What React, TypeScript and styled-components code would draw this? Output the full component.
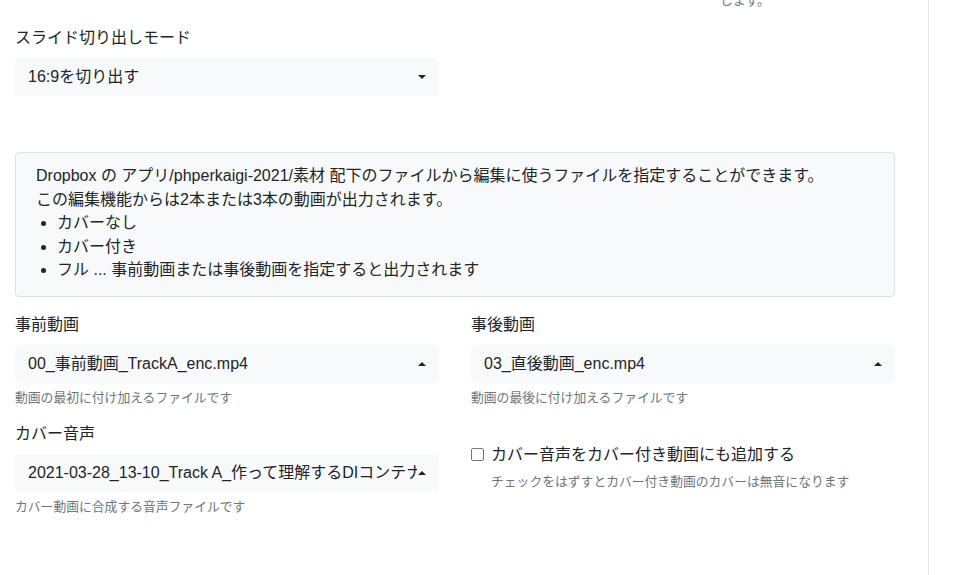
import { Component, ReactNode } from "react";
import styled, { createGlobalStyle } from "styled-components";

const GlobalStyle = createGlobalStyle`
  html, body {
    margin: 0;
    padding: 0;
    background: #ffffff;
    overflow: hidden;
  }
  body {
    font-family: "Liberation Sans", "Noto Sans CJK JP", sans-serif;
    color: #212529;
    font-size: 16px;
  }
`;

const Page = styled.div`
  display: flex;
  height: 575px;
  overflow: hidden;
`;

const Main = styled.div`
  width: 929px;
  box-sizing: border-box;
  padding: 0 33px 0 15px;
  border-right: 1px solid #e3e3e3;
  flex-shrink: 0;
`;

const Row = styled.div`
  display: grid;
  grid-template-columns: 424px 424px;
  column-gap: 32px;
`;

const Group = styled.div`
  margin-bottom: 15px;
`;

const TopGroup = styled.div`
  padding-top: 25px;
`;

const Label = styled.div`
  font-size: 16px;
  line-height: 24px;
  margin-bottom: 8px;
`;

const SelectBox = styled.div`
  height: 38px;
  background: #f8f9fa;
  border-radius: 4px;
  display: flex;
  align-items: center;
  padding: 0 12px 0 13px;
  font-size: 16px;
`;

const SelectValue = styled.span`
  flex: 1;
  white-space: nowrap;
  overflow: hidden;
  text-overflow: clip;
  line-height: 24px;
`;

const Caret = styled.span<{ $up?: boolean }>`
  width: 0;
  height: 0;
  border-left: 4px solid transparent;
  border-right: 4px solid transparent;
  ${(p) => (p.$up ? "border-bottom: 4px solid #212529;" : "border-top: 4px solid #212529;")}
  margin: 0 1px;
  flex-shrink: 0;
`;

const Help = styled.div`
  font-size: 12.8px;
  line-height: 19px;
  color: #6c757d;
  margin-top: 5px;
`;

const TopHelp = styled(Help)`
  margin-top: -9px;
  padding-left: 249px;
  height: 10px;
`;

const InfoBox = styled.div`
  margin-top: 56px;
  background: #f8f9fa;
  border: 1px solid #dee2e6;
  border-radius: 4px;
  padding: 11px 20px 14px;
  font-size: 16px;
  line-height: 23.5px;
  margin-bottom: 16px;
`;

const InfoList = styled.ul`
  margin: 0;
  padding-left: 21px;
`;

const CheckWrap = styled.div`
  margin-top: 21px;
`;

const CheckRow = styled.label`
  display: flex;
  align-items: center;
  font-size: 16px;
  line-height: 24px;
`;

const CheckBox = styled.span`
  width: 11px;
  height: 11px;
  border: 1px solid #767676;
  border-radius: 2px;
  margin: 0 7px 0 0;
  flex-shrink: 0;
`;

const CheckHelp = styled(Help)`
  padding-left: 20px;
`;

interface SelectProps {
  value: string;
  up?: boolean;
}

class Select extends Component<SelectProps> {
  render(): ReactNode {
    return (
      <SelectBox>
        <SelectValue>{this.props.value}</SelectValue>
        <Caret $up={this.props.up} />
      </SelectBox>
    );
  }
}

export default class App extends Component {
  render(): ReactNode {
    return (
      <Page>
        <GlobalStyle />
        <Main>
          <Row>
            <div />
            <TopHelp>します。</TopHelp>
          </Row>
          <Row>
            <TopGroup>
              <Label>スライド切り出しモード</Label>
              <Select value="16:9を切り出す" />
            </TopGroup>
            <div />
          </Row>
          <InfoBox>
            Dropbox の アプリ/phperkaigi-2021/素材 配下のファイルから編集に使うファイルを指定することができます。
            <br />
            この編集機能からは2本または3本の動画が出力されます。
            <InfoList>
              <li>カバーなし</li>
              <li>カバー付き</li>
              <li>フル ... 事前動画または事後動画を指定すると出力されます</li>
            </InfoList>
          </InfoBox>
          <Row>
            <Group>
              <Label>事前動画</Label>
              <Select value="00_事前動画_TrackA_enc.mp4" up />
              <Help>動画の最初に付け加えるファイルです</Help>
            </Group>
            <Group>
              <Label>事後動画</Label>
              <Select value="03_直後動画_enc.mp4" up />
              <Help>動画の最後に付け加えるファイルです</Help>
            </Group>
          </Row>
          <Row>
            <Group>
              <Label>カバー音声</Label>
              <Select value="2021-03-28_13-10_Track A_作って理解するDIコンテナ.mp3" up />
              <Help>カバー動画に合成する音声ファイルです</Help>
            </Group>
            <CheckWrap>
              <CheckRow>
                <CheckBox />
                カバー音声をカバー付き動画にも追加する
              </CheckRow>
              <CheckHelp>チェックをはずすとカバー付き動画のカバーは無音になります</CheckHelp>
            </CheckWrap>
          </Row>
        </Main>
      </Page>
    );
  }
}
